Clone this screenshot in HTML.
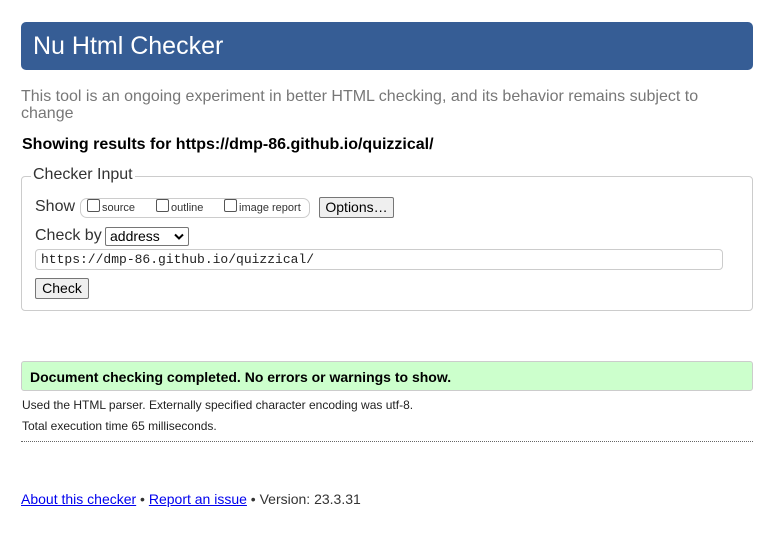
<!DOCTYPE html>
<html><head><meta charset="utf-8"><style>
body{margin:0;width:776px;height:550px;background:#fff;font-family:"Liberation Sans",Arial,sans-serif;position:relative;overflow:hidden;color:#000}
.a{position:absolute;white-space:nowrap}
.cb{display:inline-block;width:11px;height:11px;border:1px solid #555;border-radius:2px;vertical-align:-1px;margin-right:2px;background:#fff}
.btn{position:absolute;background:#efefef;border:1px solid #767676;border-radius:2px;font-size:14px;text-align:center;box-sizing:border-box}
</style></head><body>
<div class="a" style="left:21px;top:22px;width:732px;height:48px;background:#365d95;border-radius:5px"></div>
<div class="a" style="left:33px;top:32px;font-size:25px;color:#fff">Nu Html Checker</div>
<div class="a" style="left:21px;top:88px;font-size:16px;line-height:17px;color:#777;white-space:normal;width:700px">This tool is an ongoing experiment in better HTML checking, and its behavior remains subject to change</div>
<div class="a" style="left:22px;top:136px;font-size:16px;font-weight:bold">Showing results for https://dmp-86.github.io/quizzical/</div>
<div class="a" style="left:21px;top:176px;width:730px;height:133px;border:1px solid #ccc;border-radius:4px"></div>
<div class="a" style="left:31px;top:166px;font-size:16px;background:#fff;padding:0 2px;color:#333">Checker Input</div>
<div class="a" style="left:35px;top:198px;font-size:16px;color:#333">Show</div>
<div class="a" style="left:80px;top:198px;width:228px;height:18px;border:1px solid #ccc;border-radius:7px"></div>
<div class="a" style="left:87px;top:199px;font-size:11px;color:#333"><span class="cb"></span>source</div>
<div class="a" style="left:156px;top:199px;font-size:11px;color:#333"><span class="cb"></span>outline</div>
<div class="a" style="left:224px;top:199px;font-size:11px;color:#333"><span class="cb"></span>image report</div>
<div class="btn" style="left:319px;top:197px;width:75px;height:21px;line-height:19px">Options…</div>
<div class="a" style="left:35px;top:227px;font-size:16px;color:#333">Check by</div>
<div class="a" style="left:105px;top:227px;width:84px;height:19px;border:1px solid #767676;border-radius:2px;font-size:14px;line-height:17px;padding-left:4px;box-sizing:border-box">address<svg style="position:absolute;right:4px;top:5px" width="10" height="7" viewBox="0 0 10 7"><path d="M1 1.5L5 5.5L9 1.5" fill="none" stroke="#000" stroke-width="2"/></svg></div>
<div class="a" style="left:35px;top:249px;width:686px;height:19px;border:1px solid #ccc;border-radius:4px"></div>
<div class="a" style="left:41px;top:252px;font-family:'Liberation Mono',monospace;font-size:13px;color:#222">https://dmp-86.github.io/quizzical/</div>
<div class="btn" style="left:35px;top:278px;width:54px;height:21px;line-height:19px">Check</div>
<div class="a" style="left:21px;top:361px;width:730px;height:28px;background:#ccffcc;border:1px solid #ccc;border-radius:3px"></div>
<div class="a" style="left:30px;top:369px;font-size:14px;font-weight:bold">Document checking completed. No errors or warnings to show.</div>
<div class="a" style="left:22px;top:398px;font-size:12px;color:#222">Used the HTML parser. Externally specified character encoding was utf-8.</div>
<div class="a" style="left:22px;top:419px;font-size:12px;color:#222">Total execution time 65 milliseconds.</div>
<div class="a" style="left:21px;top:441px;width:732px;border-top:1px dotted #666"></div>
<div class="a" style="left:21px;top:491px;font-size:14px;color:#333"><span style="color:#00e;text-decoration:underline">About this checker</span> • <span style="color:#00e;text-decoration:underline">Report an issue</span> • Version: 23.3.31</div>
</body></html>
